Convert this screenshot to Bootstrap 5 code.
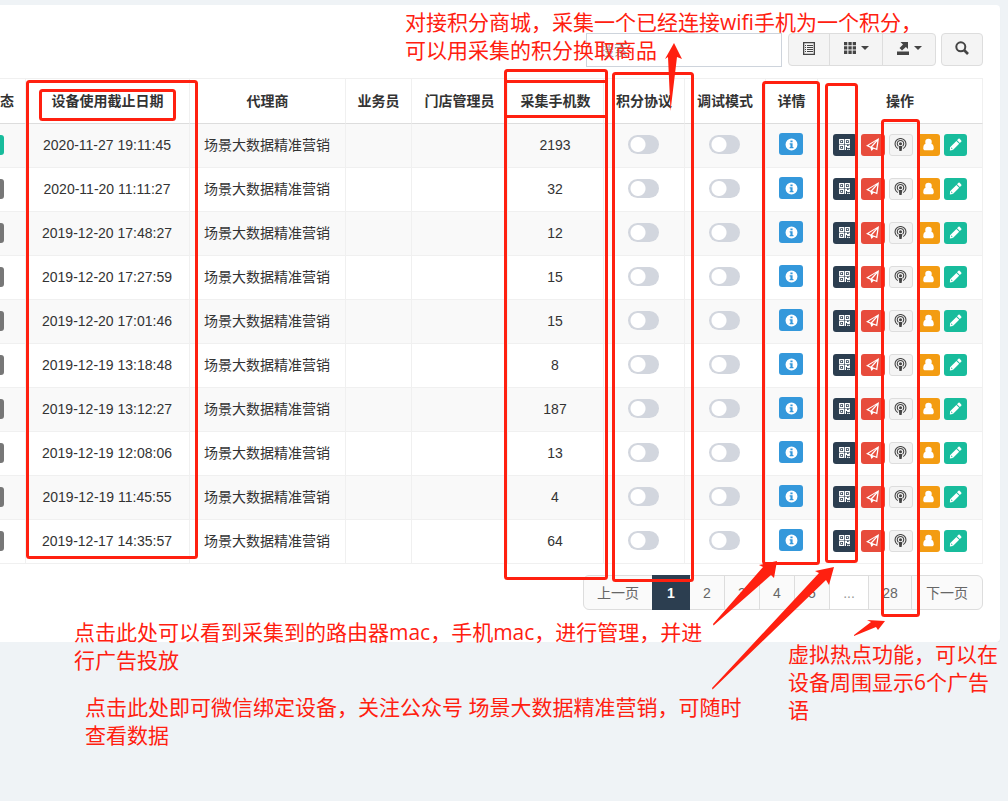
<!DOCTYPE html>
<html lang="zh-CN">
<head>
<meta charset="utf-8">
<meta name="viewport" content="width=device-width, initial-scale=1">
<title>设备管理</title>
<link href="https://cdn.jsdelivr.net/npm/bootstrap@5.3.0/dist/css/bootstrap.min.css" rel="stylesheet">
<style>
  body { background: #eff3f6; color: #333; font: 14px/20px "Liberation Sans", "Noto Sans CJK SC", sans-serif; overflow-x: hidden; }
  .panel-box { background: #fff; border-radius: 0 4px 4px 0; box-shadow: 0 1px 1px rgba(0,0,0,.06); margin: 5px 8px 0 0; padding: 28px 17px 32px 0; }
  .tool-row { gap: 5px; }
  .search-box { width: 196px; height: 34px; border: 1px solid #ced4dc; border-radius: 0; padding: 0 13px; font-size: 14px; margin-right: 1px; }
  .search-box::placeholder { color: #999; }
  .tool-btn { background: #f4f4f4; border: 1px solid #ddd; color: #444; height: 33px; padding: 0 0 3px; width: 54px; border-radius: 4px; display: inline-flex; align-items: center; justify-content: center; gap: 5px; }
  .tool-btn.narrow, .tool-btn.alone { width: 42px; }
  .tool-btn .caret { border: 4px solid transparent; border-top-color: #444; border-bottom: 0; }
  .data-grid { table-layout: fixed; border-collapse: separate; border-spacing: 0; border-top: 1px solid #f0f0f0; margin: 11px 0; width: 100%; }
  .data-grid th, .data-grid td { border-right: 1px solid #f0f0f0; border-bottom: 1px solid #f0f0f0; text-align: center; vertical-align: middle; padding: 0; height: 44px; white-space: nowrap; }
  .data-grid td { padding: 0 1px 2px 0; }
  .data-grid th { border-bottom-color: #ddd; height: 45px; }
  .data-grid tbody tr:nth-child(odd) td { background: #f9f9f9; }
  .data-grid .state-col { text-align: left; }
  .state-tag { display: block; width: 4px; height: 20px; border-radius: 0 3px 3px 0; background: #777; }
  .state-tag.on { background: #18bc9c; }
  .flip { appearance: none; display: block; width: 31px; height: 19px; margin: 0 auto; border-radius: 10px; background: radial-gradient(circle at 10px 50%, #fff 7px, transparent 8px) #d2d6de; }
  .op { display: inline-flex; align-items: center; justify-content: center; width: 24px; height: 22px; padding: 0; border: 0; border-radius: 3px; color: #fff; }
  .op.slim { width: 23px; }
  .op-info { background: #3498db; } .op-qr { background: #2c3e50; } .op-send { background: #e74c3c; }
  .op-spot { background: #f4f4f4; border: 1px solid #ddd; color: #444; } .op-user { background: #f39c12; } .op-edit { background: #18bc9c; }
  .op svg { width: 13px; height: 13px; fill: currentColor; flex: none; }
  .pager .page-link { background: #fafafa; border-color: #ddd; color: #666; font-size: 14px; line-height: 20px; height: 35px; padding: 7px 0 0; text-align: center; width: 36px; }
  .pager .wide .page-link { width: 70px; }
  .pager .end .page-link { width: 72px; }
  .pager .mid .page-link { width: 40px; }
  .pager .last .page-link { width: 44px; }
  .pager .active .page-link { background: #2c3e50; border-color: #2c3e50; color: #fff; font-weight: bold; width: 38px; }
  .pager .disabled .page-link { background: #fff; color: #999; }
  .marks { position: absolute; inset: 0 auto auto 0; pointer-events: none; z-index: 5; }
  .marks svg { display: block; }
  .note { position: absolute; z-index: 6; margin: 0; color: #ff2010; font: 21px/28px "Open Sans", "Noto Sans CJK SC", sans-serif; white-space: nowrap; pointer-events: none; }
  .note-points { left: 405px; top: 8px; }
  .note-detail { left: 74px; top: 618px; }
  .note-bind { left: 85px; top: 693px; }
  .note-hotspot { left: 788px; top: 640px; }
</style>
</head>
<body>
<svg width="0" height="0" class="position-absolute" aria-hidden="true">
  <symbol id="i-info" viewBox="0 0 12 12"><path fill-rule="evenodd" d="M6 .5a5.500 5.500 0 1 0 0 11a5.500 5.500 0 0 0 0-11zM5 2.300h2v1.600H5zM4.300 4.800H7v3.500h.8v1.200H4.300V8.300H5V6h-.7z"/></symbol>
  <symbol id="i-qr" viewBox="0 0 12 12"><path fill-rule="evenodd" d="M1 1h4.700v4.700H1zM2.100 2.100v2.500h2.500V2.100zM2.800 2.800h1.100v1.100H2.800zM6.300 1H11v4.700H6.300zM7.400 2.100v2.500h2.500V2.100zM8.100 2.800h1.100v1.100H8.100zM1 6.300h4.700V11H1zM2.100 7.400v2.500h2.500V7.400zM2.800 8.100h1.100v1.100H2.800zM6.300 6.300h2.100v1h1.400v-1H11v3H8.400v-1h-1V11H6.300zM8.400 10h1.100v1H8.400zM9.900 10H11v1H9.900z"/></symbol>
  <symbol id="i-send" viewBox="0 0 12 12"><path fill-rule="evenodd" d="M12 0L10.400 11.300 7.100 10 5 12 4 9 0 7.200zM9.300 2.600L2.400 6.900 4.400 7.800zM10.400 3L5.700 8.300 9.400 9.800z"/></symbol>
  <symbol id="i-spot" viewBox="0 0 12 12"><g fill="none" stroke="currentColor"><path d="M3.500 9.800a5 5 0 1 1 5 0M4 7.500a3 3 0 1 1 4 0"/></g><circle cx="6" cy="5.400" r="1.400"/><path d="M4.300 7.300h3.400L7 12H5z"/></symbol>
  <symbol id="i-user" viewBox="0 0 12 12"><circle cx="6" cy="3.600" r="3"/><path d="M3.400 5.400C1.800 5.800 1.200 7.300 1.200 9.400c0 1.400.7 1.900 1.700 1.900h6.200c1 0 1.700-.5 1.700-1.900 0-2.100-.6-3.600-2.200-4z"/></symbol>
  <symbol id="i-edit" viewBox="0 0 12 12"><path fill-rule="evenodd" d="M8.700.8q.6-.5 1.200 0l1.400 1.400q.5.600 0 1.200L10 4.700 7.400 2.100zM6.800 2.700L9.400 5.300 3.600 11.100.8 11.500 1 8.500zM1.900 9.100v.9h1v.7l.5-.5-1.100-1.400z"/></symbol>
</svg>

<main class="panel-box">
  <div class="d-flex justify-content-end tool-row">
    <input class="form-control search-box" type="search" placeholder="搜索" aria-label="搜索">
    <div class="btn-group">
      <button class="btn tool-btn narrow" type="button" aria-label="切换视图"><svg width="12" height="13" viewBox="0 0 12 13"><path fill="none" stroke="#444" stroke-width="1.300" d="M.65.65h10.700v11.700H.65z"/><path stroke="#444" d="M2 3.500h1M4 3.500h6M2 5.500h1M4 5.500h6M2 7.500h1M4 7.500h6M2 9.500h1M4 9.500h6"/></svg></button>
      <button class="btn tool-btn" type="button" aria-label="选择列"><svg width="12" height="12" viewBox="0 0 12 12"><path fill="#444" d="M0 0h3.300v3.300H0zM4.400 0h3.300v3.300H4.400zM8.700 0H12v3.300H8.700zM0 4.300h3.300v3.300H0zM4.400 4.300h3.300v3.300H4.400zM8.700 4.300H12v3.300H8.700zM0 8.600h3.300v3.300H0zM4.400 8.600h3.300v3.300H4.400zM8.700 8.600H12v3.300H8.700z"/></svg><span class="caret"></span></button>
      <button class="btn tool-btn" type="button" aria-label="导出"><svg width="12" height="13" viewBox="0 0 12 13"><path fill="#444" d="M3.500 0H11v7L8.900 4.900 5 8.400 2.500 6 6 2.400zM0 9.500h12V13H0z"/></svg><span class="caret"></span></button>
    </div>
    <button class="btn tool-btn alone" type="button" aria-label="高级搜索"><svg width="14" height="14" viewBox="0 0 14 14"><g fill="none" stroke="#444" stroke-width="2"><circle cx="5.800" cy="5.800" r="4.500"/><path stroke-width="2.600" d="M9 9l4 4"/></g></svg></button>
  </div>

  <table class="data-grid">
    <colgroup><col style="width:26px"><col style="width:164px"><col><col style="width:66px"><col style="width:96px"><col style="width:96px"><col style="width:81px"><col style="width:81px"><col style="width:52px"><col style="width:165px"></colgroup>
    <thead><tr><th class="state-col">态</th><th>设备使用截止日期</th><th>代理商</th><th>业务员</th><th>门店管理员</th><th>采集手机数</th><th>积分协议</th><th>调试模式</th><th>详情</th><th>操作</th></tr></thead>
    <tbody id="rows"></tbody>
  </table>

  <nav aria-label="分页">
    <ul class="pagination pager justify-content-end mb-0">
      <li class="page-item wide"><a class="page-link" href="#">上一页</a></li>
      <li class="page-item active"><a class="page-link" href="#">1</a></li>
      <li class="page-item"><a class="page-link" href="#">2</a></li>
      <li class="page-item"><a class="page-link" href="#">3</a></li>
      <li class="page-item"><a class="page-link" href="#">4</a></li>
      <li class="page-item"><a class="page-link" href="#">5</a></li>
      <li class="page-item mid disabled"><a class="page-link" href="#">...</a></li>
      <li class="page-item last"><a class="page-link" href="#">28</a></li>
      <li class="page-item end"><a class="page-link" href="#">下一页</a></li>
    </ul>
  </nav>
</main>

<div class="marks" aria-hidden="true">
  <svg width="1008" height="801" viewBox="0 0 1008 801">
    <g fill="none" stroke="#ff2010" stroke-width="3">
      <rect x="27.500" y="81.500" width="169" height="476" rx="2"/>
      <rect x="40.500" y="90.500" width="134" height="29" rx="2"/>
      <path d="M506 81.500h100M506 116.500h100"/>
      <rect x="505.500" y="70.500" width="101" height="508" rx="2"/>
      <rect x="613.500" y="73.500" width="79" height="507" rx="2"/>
      <rect x="763.500" y="82.500" width="55" height="481" rx="2"/>
      <rect x="826.500" y="84.500" width="30" height="477" rx="2"/>
      <rect x="882.500" y="120.500" width="36" height="495" rx="2"/>
    </g>
    <g fill="#ff2010">
      <path d="M674 43L682 59 677 57 670.500 111 668 57 665 59z"/>
      <path d="M777 561L774 578 771 575 713.500 625.500 713 624 763 567 759 565z"/>
      <path d="M834 567L829 585 826 580 712.500 689.500 712 688 819 573 815 571z"/>
      <path d="M885 621L878 630 876 627 854 636 854 635 871 622 867 620z"/>
    </g>
  </svg>
</div>
<p class="note note-points">对接积分商城，采集一个已经连接wifi手机为一个积分，<br>可以用采集的积分换取商品</p>
<p class="note note-detail">点击此处可以看到采集到的路由器mac，手机mac，进行管理，并进<br>行广告投放</p>
<p class="note note-bind">点击此处即可微信绑定设备，关注公众号 场景大数据精准营销，可随时<br>查看数据</p>
<p class="note note-hotspot">虚拟热点功能，可以在<br>设备周围显示6个广告<br>语</p>

<script>
  const devices = [
    ["2020-11-27 19:11:45", 2193], ["2020-11-20 11:11:27", 32], ["2019-12-20 17:48:27", 12],
    ["2019-12-20 17:27:59", 15], ["2019-12-20 17:01:46", 15], ["2019-12-19 13:18:48", 8],
    ["2019-12-19 13:12:27", 187], ["2019-12-19 12:08:06", 13], ["2019-12-19 11:45:55", 4],
    ["2019-12-17 14:35:57", 64]
  ];
  const op = (icon, label, extra = "") =>
    `<button type="button" class="op op-${icon} ${extra}" aria-label="${label}"><svg><use href="#i-${icon}"/></svg></button>`;
  document.getElementById("rows").innerHTML = devices.map(([date, count], i) => `
    <tr>
      <td class="state-col"><span class="state-tag ${i ? "" : "on"}"></span></td>
      <td>${date}</td><td>场景大数据精准营销</td><td></td><td></td><td>${count}</td>
      <td><input class="flip" type="checkbox" role="switch" aria-label="积分协议"></td>
      <td><input class="flip" type="checkbox" role="switch" aria-label="调试模式"></td>
      <td>${op("info", "详情")}</td>
      <td><div class="d-flex justify-content-center gap-1">${op("qr", "二维码")}${op("send", "投放")}${op("spot", "热点")}${op("user", "用户", "slim")}${op("edit", "编辑", "slim")}</div></td>
    </tr>`).join("");
</script>
<script src="https://cdn.jsdelivr.net/npm/bootstrap@5.3.0/dist/js/bootstrap.bundle.min.js"></script>
</body>
</html>
